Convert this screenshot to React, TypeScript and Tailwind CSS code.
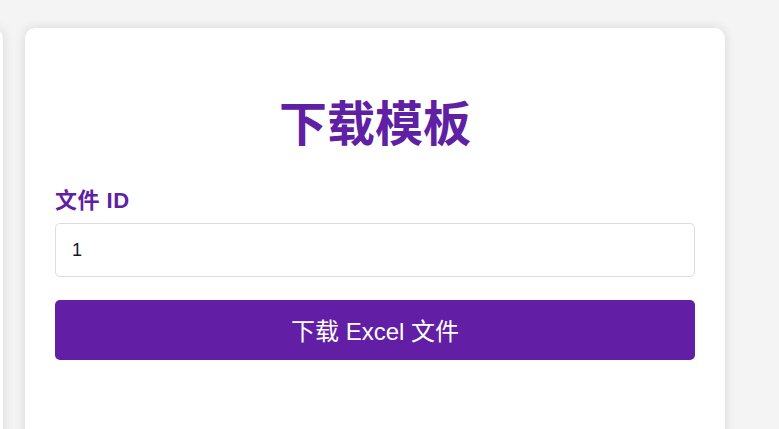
export default function App() {
  return (
    <div
      className="min-h-screen bg-[#f4f4f4] flex items-start gap-[22px] pt-[28px] overflow-hidden"
      style={{ fontFamily: '"Liberation Sans", "Noto Sans CJK SC", sans-serif' }}
    >
      <div className="w-[300px] -ml-[297px] h-[600px] shrink-0 bg-white rounded-[10px] shadow-[0_0_12px_rgba(0,0,0,0.12)]" />
      <div className="w-[700px] h-[600px] shrink-0 bg-white rounded-[10px] shadow-[0_0_12px_rgba(0,0,0,0.12)] px-[30px] pt-[68px]">
        <h1 className="text-center text-[48px] leading-[58px] font-bold text-[#6020a3]">下载模板</h1>
        <label className="block mt-[34px] mb-[10px] text-[22px] leading-[25px] font-bold text-[#6020a3] tracking-[0.5px]">
          文件 ID
        </label>
        <input
          type="text"
          defaultValue="1"
          className="block w-full h-[54px] px-[16px] border border-[#dddddd] rounded-[5px] text-[18px] text-[#111827] outline-none"
        />
        <button
          type="button"
          className="mt-[23px] w-full h-[60px] pt-[3px] rounded-[5px] bg-[#621fa5] text-white text-[24px]"
        >
          下载 Excel 文件
        </button>
      </div>
    </div>
  )
}
